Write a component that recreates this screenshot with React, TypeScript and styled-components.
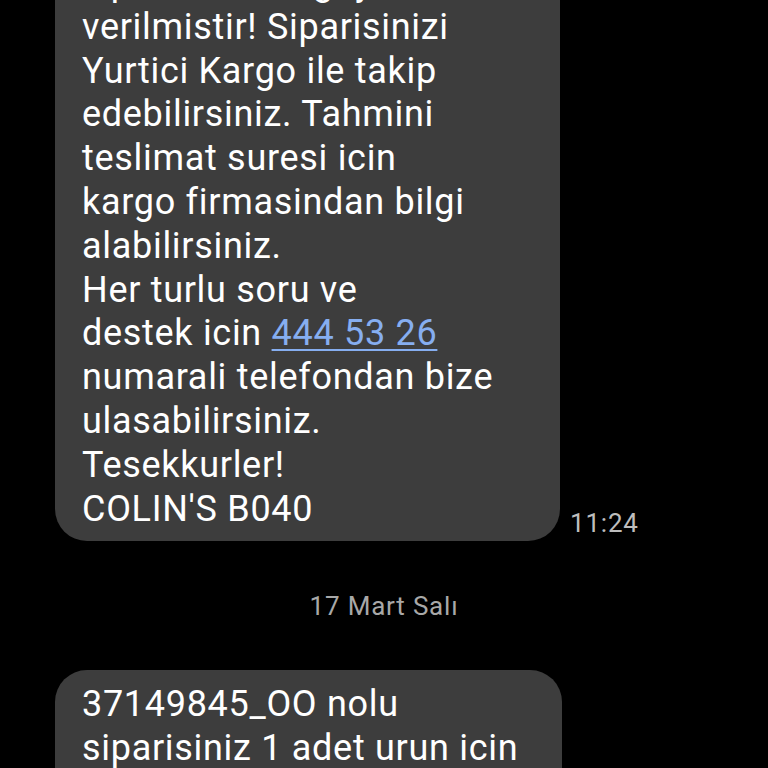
import styled, { createGlobalStyle } from "styled-components";

const GlobalStyle = createGlobalStyle`
  html, body {
    margin: 0;
    padding: 0;
    background: #000;
  }
  body {
    font-family: Roboto, "Noto Sans", sans-serif;
    overflow: hidden;
  }
`;

const Screen = styled.div`
  width: 768px;
  height: 768px;
  overflow: hidden;
  background: #000;
`;

const Thread = styled.div`
  display: flex;
  flex-direction: column;
  margin-top: -51px;
  padding-left: 55px;
`;

const Row = styled.div`
  display: flex;
  align-items: flex-end;
  gap: 10px;
`;

const Bubble = styled.div<{ $width: number }>`
  box-sizing: border-box;
  width: ${(p) => p.$width}px;
  background: #3d3d3d;
  border-radius: 32px;
  padding: 13px 20px 10px 27px;
  color: #fff;
  font-size: 36px;
  letter-spacing: 0.7px;
  line-height: 43.8px;
`;

const Line = styled.div`
  white-space: nowrap;
`;

const Link = styled.span`
  color: #86aef0;
  text-decoration: underline;
  text-decoration-thickness: 2px;
  text-underline-offset: 4px;
`;

const Time = styled.div`
  color: #bdbdbd;
  font-size: 26px;
  letter-spacing: 0.8px;
  margin-bottom: 3px;
`;

const DateLabel = styled.div`
  color: #a8a8a8;
  font-size: 26px;
  letter-spacing: 0.8px;
  text-align: center;
  width: 658px;
  margin: 50px 0 49px;
`;

const firstLines = [
  "siparisiniz kargoya",
  "verilmistir! Siparisinizi",
  "Yurtici Kargo ile takip",
  "edebilirsiniz. Tahmini",
  "teslimat suresi icin",
  "kargo firmasindan bilgi",
  "alabilirsiniz.",
  "Her turlu soru ve",
];

const lastLines = [
  "numarali telefondan bize",
  "ulasabilirsiniz.",
  "Tesekkurler!",
  "COLIN'S B040",
];

const secondLines = ["37149845_OO nolu", "siparisiniz 1 adet urun icin", "kargoya verilmistir!"];

export default function App() {
  return (
    <Screen>
      <GlobalStyle />
      <Thread>
        <Row>
          <Bubble $width={505}>
            {firstLines.map((l) => (
              <Line key={l}>{l}</Line>
            ))}
            <Line>
              destek icin <Link>444 53 26</Link>
            </Line>
            {lastLines.map((l) => (
              <Line key={l}>{l}</Line>
            ))}
          </Bubble>
          <Time>11:24</Time>
        </Row>
        <DateLabel>17 Mart Salı</DateLabel>
        <Bubble $width={507}>
          {secondLines.map((l) => (
            <Line key={l}>{l}</Line>
          ))}
        </Bubble>
      </Thread>
    </Screen>
  );
}
